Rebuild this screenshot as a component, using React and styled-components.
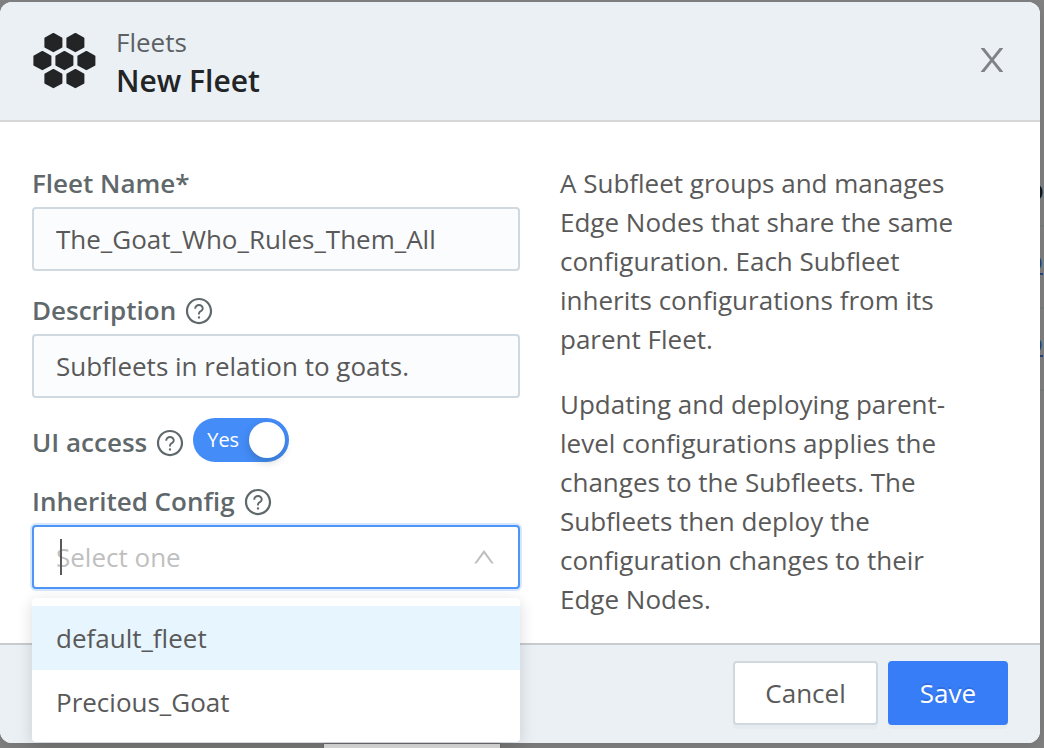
import React, { useState } from "react";
import styled, { createGlobalStyle, css } from "styled-components";
import { AiOutlineQuestionCircle } from "react-icons/ai";

const GlobalStyle = createGlobalStyle`
  *, *::before, *::after { box-sizing: border-box; }
  body {
    margin: 0;
    background: #828282;
    color: #595959;
    font-family: "Open Sans", "Noto Sans", sans-serif;
    font-size: 26px;
    line-height: 39px;
  }
  button, input { font: inherit; color: inherit; }
`;

const Page = styled.div`
  min-height: 100vh;
  display: flex;
  flex-direction: column;
  padding-top: 2px;
`;

const Stage = styled.div`
  flex: 1;
  display: flex;
`;

const Dialog = styled.form`
  flex: 1;
  min-width: 0;
  display: flex;
  flex-direction: column;
  background: #ffffff;
  border-radius: 12px;
  box-shadow: 0 4px 16px rgba(0, 0, 0, 0.12);
`;

const Header = styled.header`
  display: flex;
  align-items: center;
  gap: 20px;
  height: 120px;
  padding: 0 32px;
  background: #ebf0f5;
  border-bottom: 2px solid #d6d7d9;
  border-radius: 12px 12px 0 0;
`;

const Titles = styled.div`
  flex: 1;
`;

const Crumb = styled.div`
  color: #5c6063;
`;

const Title = styled.h1`
  margin: 0;
  color: #222426;
  font-size: 30px;
  font-weight: 600;
  line-height: 38px;
`;

const CloseButton = styled.button`
  display: flex;
  padding: 0 0 2px;
  margin-right: -2px;
  border: 0;
  background: none;
  color: #808386;
  cursor: pointer;
`;

const Body = styled.div`
  flex: 1;
  display: flex;
  padding: 42px 32px 24px;
`;

const Fields = styled.div`
  flex: 0 0 50%;
  display: flex;
  flex-direction: column;
  gap: 20px;
`;

const Field = styled.div`
  display: flex;
  flex-direction: column;
  gap: 4px;
`;

const InlineField = styled.div`
  display: flex;
  align-items: flex-end;
  gap: 8px;
  height: 44px;
`;

const LabelRow = styled.div`
  display: flex;
  align-items: center;
  gap: 8px;
  color: #5f686b;
`;

const Label = styled.label`
  font-weight: 600;
`;

const control = css`
  width: 100%;
  height: 64px;
  padding: 0 22px;
  border: 2px solid #d0d9e0;
  border-radius: 4px;
  background: #fbfcfe;
  outline: none;
`;

const TextInput = styled.input`
  ${control}
`;

const Switch = styled.span`
  position: relative;
  display: flex;
  width: 96px;
  height: 44px;
  border-radius: 22px;
  background: ${(p) => (p.$on ? "#448cf8" : "#b4bac0")};
`;

const SwitchInput = styled.input`
  position: absolute;
  inset: 0;
  width: 100%;
  height: 100%;
  margin: 0;
  opacity: 0;
  cursor: pointer;
`;

const SwitchFace = styled.span`
  flex: 1;
  display: flex;
  flex-direction: ${(p) => (p.$on ? "row" : "row-reverse")};
  align-items: center;
  justify-content: space-between;
  padding: ${(p) => (p.$on ? "0 4px 0 14px" : "0 14px 0 4px")};
  color: #ffffff;
  font-size: 20px;
  line-height: 36px;
`;

const Knob = styled.span`
  width: 36px;
  height: 36px;
  border-radius: 50%;
  background: #ffffff;
  box-shadow: 0 4px 8px rgba(0, 35, 11, 0.2);
`;

const Picker = styled.div`
  position: relative;
`;

const PickerInput = styled.input`
  ${control}
  padding-right: 60px;
  background: #ffffff;
  border-color: ${(p) => (p.$open ? "#4d96f7" : "#d0d9e0")};
  box-shadow: ${(p) => (p.$open ? "0 0 0 2px #d5e6fd" : "none")};
  caret-color: transparent;
  &::placeholder {
    color: #bfbfbf;
    opacity: 1;
  }
`;

const Caret = styled.span`
  position: absolute;
  top: 14px;
  left: 28px;
  width: 2px;
  height: 36px;
  background: #595959;
  pointer-events: none;
`;

const Arrow = styled.svg`
  position: absolute;
  top: 19px;
  right: 23px;
  color: #bfbfbf;
  pointer-events: none;
`;

const Menu = styled.ul`
  position: absolute;
  z-index: 1;
  top: 73px;
  left: 0;
  right: 0;
  margin: 0;
  padding: 8px 0;
  list-style: none;
  border-radius: 4px;
  background: #ffffff;
  box-shadow: 0 4px 16px rgba(0, 0, 0, 0.15);
`;

const Option = styled.li`
  height: 64px;
  padding: 0 24px;
  line-height: 64px;
  background: ${(p) => (p.$active ? "#e7f5fe" : "transparent")};
  cursor: pointer;
`;

const Help = styled.div`
  flex: 1;
  display: flex;
  flex-direction: column;
  gap: 26px;
  padding: 0 24px 0 40px;
`;

const Paragraph = styled.p`
  margin: 0;
`;

const Footer = styled.footer`
  display: flex;
  justify-content: flex-end;
  gap: 10px;
  padding: 16px 32px 18px;
  background: #ebf0f5;
  border-top: 2px solid #c8ccd0;
  border-radius: 0 0 12px 12px;
`;

const Button = styled.button`
  height: 64px;
  padding: 0 30px;
  border: 2px solid ${(p) => (p.$primary ? "#377df8" : "#d0d9e0")};
  border-radius: 4px;
  background: ${(p) => (p.$primary ? "#377df8" : "#ffffff")};
  color: ${(p) => (p.$primary ? "#ffffff" : "#595959")};
  text-shadow: ${(p) => (p.$primary ? "0 -2px 0 rgba(0, 0, 0, 0.12)" : "none")};
  box-shadow: 0 4px 0 rgba(0, 0, 0, 0.02);
  cursor: pointer;
`;

/* Sliver of the dimmed fleet table that stays visible beside the dialog. */
const TableEdge = styled.div`
  width: 4px;
  padding-top: 149px;
  overflow: hidden;
`;

const EdgeCell = styled.div`
  display: flex;
  align-items: center;
  justify-content: flex-end;
  height: ${(p) => (p.$head ? "76px" : "82px")};
  padding: ${(p) => (p.$head ? "0" : "0 1px 14px 0")};
  border-bottom: 2px solid #747778;
  color: ${(p) => (p.$head ? "#141414" : "#1d4384")};
  font-size: ${(p) => (p.$head ? "30px" : "26px")};
  text-decoration: ${(p) => (p.$head ? "none" : "underline")};
  text-decoration-thickness: 2px;
  text-underline-offset: 3px;
`;

const BottomEdge = styled.div`
  height: 5px;
  padding: 1px 0 0 324px;
`;

const StatusTab = styled.div`
  width: 176px;
  height: 4px;
  background: #dedede;
  box-shadow: 0 0 2px #555555;
`;

const cells = [[53, 43], [75, 43], [42, 61], [64, 61], [86, 61], [53, 79], [75, 79]];

function FleetLogo() {
  return (
    <svg width="64" height="56" viewBox="31.6 33.4 64 56" fill="#222426" stroke="#222426" strokeWidth="2" strokeLinejoin="round" aria-hidden="true">
      {cells.map(([x, y]) => (
        <path key={`${x}-${y}`} d={`M${x} ${y - 8.6}l8 4.3v8.6l-8 4.3l-8-4.3v-8.6z`} />
      ))}
    </svg>
  );
}

function FieldLabel({ htmlFor, help, children }) {
  return (
    <LabelRow>
      <Label htmlFor={htmlFor}>{children}</Label>
      {help && <AiOutlineQuestionCircle size={30} aria-hidden="true" />}
    </LabelRow>
  );
}

const options = ["default_fleet", "Precious_Goat"];

export default function App() {
  const [name, setName] = useState("The_Goat_Who_Rules_Them_All");
  const [description, setDescription] = useState("Subfleets in relation to goats.");
  const [access, setAccess] = useState(true);
  const [config, setConfig] = useState("");
  const [open, setOpen] = useState(true);
  const [active, setActive] = useState(0);

  const choose = (option) => {
    setConfig(option);
    setOpen(false);
  };

  return (
    <Page>
      <GlobalStyle />
      <Stage>
        <Dialog role="dialog" aria-labelledby="dialog-title" onSubmit={(e) => e.preventDefault()}>
          <Header>
            <FleetLogo />
            <Titles>
              <Crumb>Fleets</Crumb>
              <Title id="dialog-title">New Fleet</Title>
            </Titles>
            <CloseButton type="button" aria-label="Close">
              <svg width="36" height="38" viewBox="0 0 1024 1024" preserveAspectRatio="none" fill="currentColor" aria-hidden="true">
                <path d="M563.8 512l262.5-312.9c4.4-5.2.7-13.1-6.1-13.1h-79.8c-4.7 0-9.2 2.1-12.3 5.7L511.6 449.8 295.1 191.7c-3-3.6-7.5-5.7-12.3-5.7H203c-6.8 0-10.5 7.9-6.1 13.1L459.4 512 196.9 824.9A7.95 7.95 0 0 0 203 838h79.8c4.7 0 9.2-2.1 12.3-5.7l216.5-258.1 216.5 258.1c3 3.6 7.5 5.7 12.3 5.7h79.8c6.8 0 10.5-7.9 6.1-13.1L563.8 512z" />
              </svg>
            </CloseButton>
          </Header>

          <Body>
            <Fields>
              <Field>
                <FieldLabel htmlFor="name">Fleet Name*</FieldLabel>
                <TextInput id="name" value={name} onChange={(e) => setName(e.target.value)} />
              </Field>
              <Field>
                <FieldLabel htmlFor="description" help>Description</FieldLabel>
                <TextInput id="description" value={description} onChange={(e) => setDescription(e.target.value)} />
              </Field>
              <InlineField>
                <FieldLabel htmlFor="access" help>UI access</FieldLabel>
                <Switch $on={access}>
                  <SwitchFace $on={access}>
                    {access ? "Yes" : "No"}
                    <Knob />
                  </SwitchFace>
                  <SwitchInput id="access" type="checkbox" role="switch" checked={access} onChange={(e) => setAccess(e.target.checked)} />
                </Switch>
              </InlineField>
              <Field>
                <FieldLabel htmlFor="config" help>Inherited Config</FieldLabel>
                <Picker>
                  <PickerInput
                    id="config"
                    role="combobox"
                    aria-expanded={open}
                    aria-controls="config-options"
                    autoComplete="off"
                    placeholder="Select one"
                    value={config}
                    $open={open}
                    onClick={() => setOpen(!open)}
                    onChange={(e) => setConfig(e.target.value)}
                  />
                  {open && !config && <Caret />}
                  <Arrow width="26" height="26" viewBox="0 0 1024 1024" fill="currentColor" aria-hidden="true">
                    <path
                      transform={open ? "rotate(180 512 512)" : undefined}
                      d="M884 256h-75c-5.1 0-9.9 2.5-12.9 6.6L512 654.2 227.9 262.6c-3-4.1-7.8-6.6-12.9-6.6h-75c-6.5 0-10.3 7.4-6.5 12.7l352.6 486.1c12.8 17.6 39 17.6 51.7 0l352.6-486.1c3.9-5.3.1-12.7-6.4-12.7z"
                    />
                  </Arrow>
                  {open && (
                    <Menu id="config-options" role="listbox" aria-label="Inherited Config">
                      {options.map((option, i) => (
                        <Option
                          key={option}
                          role="option"
                          aria-selected={option === config}
                          $active={i === active}
                          onMouseEnter={() => setActive(i)}
                          onClick={() => choose(option)}
                        >
                          {option}
                        </Option>
                      ))}
                    </Menu>
                  )}
                </Picker>
              </Field>
            </Fields>

            <Help>
              <Paragraph>
                A Subfleet groups and manages Edge Nodes that share the same configuration. Each Subfleet inherits
                configurations from its parent Fleet.
              </Paragraph>
              <Paragraph>
                Updating and deploying parent-level configurations applies the changes to the Subfleets. The Subfleets
                then deploy the configuration changes to their Edge Nodes.
              </Paragraph>
            </Help>
          </Body>

          <Footer>
            <Button type="button">Cancel</Button>
            <Button type="submit" $primary>Save</Button>
          </Footer>
        </Dialog>

        <TableEdge aria-hidden="true">
          <EdgeCell $head>o</EdgeCell>
          <EdgeCell>o</EdgeCell>
          <EdgeCell>o</EdgeCell>
        </TableEdge>
      </Stage>
      <BottomEdge>
        <StatusTab />
      </BottomEdge>
    </Page>
  );
}
